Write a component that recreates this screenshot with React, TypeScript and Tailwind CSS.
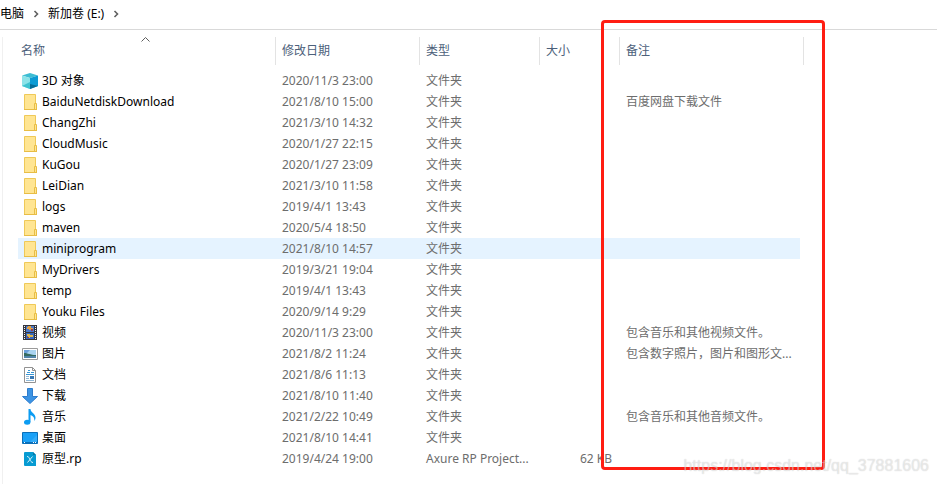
import type { ReactElement } from 'react';

type IconKind =
  | 'folder' | 'cube' | 'video' | 'picture' | 'document'
  | 'download' | 'music' | 'desktop' | 'axure';

interface Entry {
  icon: IconKind;
  name: string;
  date: string;
  type: string;
  size?: string;
  note?: string;
  hovered?: boolean;
}

const FOLDER = '文件夹';

const entries: Entry[] = [
  { icon: 'cube', name: '3D 对象', date: '2020/11/3 23:00', type: FOLDER },
  { icon: 'folder', name: 'BaiduNetdiskDownload', date: '2021/8/10 15:00', type: FOLDER, note: '百度网盘下载文件' },
  { icon: 'folder', name: 'ChangZhi', date: '2021/3/10 14:32', type: FOLDER },
  { icon: 'folder', name: 'CloudMusic', date: '2020/1/27 22:15', type: FOLDER },
  { icon: 'folder', name: 'KuGou', date: '2020/1/27 23:09', type: FOLDER },
  { icon: 'folder', name: 'LeiDian', date: '2021/3/10 11:58', type: FOLDER },
  { icon: 'folder', name: 'logs', date: '2019/4/1 13:43', type: FOLDER },
  { icon: 'folder', name: 'maven', date: '2020/5/4 18:50', type: FOLDER },
  { icon: 'folder', name: 'miniprogram', date: '2021/8/10 14:57', type: FOLDER, hovered: true },
  { icon: 'folder', name: 'MyDrivers', date: '2019/3/21 19:04', type: FOLDER },
  { icon: 'folder', name: 'temp', date: '2019/4/1 13:43', type: FOLDER },
  { icon: 'folder', name: 'Youku Files', date: '2020/9/14 9:29', type: FOLDER },
  { icon: 'video', name: '视频', date: '2020/11/3 23:00', type: FOLDER, note: '包含音乐和其他视频文件。' },
  { icon: 'picture', name: '图片', date: '2021/8/2 11:24', type: FOLDER, note: '包含数字照片，图片和图形文...' },
  { icon: 'document', name: '文档', date: '2021/8/6 11:13', type: FOLDER },
  { icon: 'download', name: '下载', date: '2021/8/10 11:40', type: FOLDER },
  { icon: 'music', name: '音乐', date: '2021/2/22 10:49', type: FOLDER, note: '包含音乐和其他音频文件。' },
  { icon: 'desktop', name: '桌面', date: '2021/8/10 14:41', type: FOLDER },
  { icon: 'axure', name: '原型.rp', date: '2019/4/24 19:00', type: 'Axure RP Project...', size: '62 KB' },
];

const drawings: Record<IconKind, ReactElement> = {
  folder: (
    <>
      <path d="M2.5.5h11v15h-11z" fill="#ffe592" stroke="#efc958" />
      <path d="M12.5 9.5h2v6h-2z" fill="#ffe592" stroke="#e8bd45" />
      <path d="M2 15.5h13" stroke="#e8bd45" />
    </>
  ),
  cube: (
    <>
      <path d="M0 2.5 8 0l8 2.5L8 5z" fill="#3dbdd3" />
      <path d="M0 2.5 8 5v11l-8-3z" fill="#8ce3e8" />
      <path d="M0 13l8-4v7z" fill="#3fc3d0" />
      <path d="M16 2.5 8 5v11l8-3z" fill="#0c9bd4" />
      <path d="M8 11l8 2-8 3z" fill="#066c96" />
    </>
  ),
  video: (
    <>
      <path d="M1 0h14v15H1z" fill="#35363d" />
      <path d="M4 1h8v6H4z" fill="#4a79c9" />
      <path d="M4 8h8v6H4z" fill="#3567bd" />
      <path d="M6 1h3v2h2v2H7V4H5V2h1z" fill="#e6a142" />
      <path d="M5 9h3v1h3v2H8v1H6v-2H5z" fill="#e0b74a" />
      <path d="M9 4h2v2H9zM5 12h2v1H5z" fill="#923e52" />
      <path d="M2.5 1v14M13.5 1v14" stroke="#f4f4f4" strokeDasharray="1 1" />
    </>
  ),
  picture: (
    <>
      <path d="M.5 2.5h15v11H.5z" fill="#fff" stroke="#9a9a9a" />
      <path d="M2 4h12v8H2z" fill="#a9d3f0" />
      <path d="M2 4h6L5 7H2z" fill="#6a9fda" />
      <path d="M2 7c4 0 6 2 12 2v1H2z" fill="#356b61" />
      <path d="M2 10h12v2H2z" fill="#5184aa" />
    </>
  ),
  document: (
    <>
      <path d="M2.5.5h8l3 3v12h-11z" fill="#fff" stroke="#929292" />
      <path d="M10.5.5v3h3" fill="none" stroke="#929292" />
      <path d="M6 3.5h2M5 5.5h3M4 7.5h8M9 5.5h3" stroke="#3695d5" />
      <path d="M4 9.5h3M4 11.5h3M4 13.5h8" stroke="#91b8d6" />
      <path d="M8 9h4v3H8z" fill="#3778b4" />
    </>
  ),
  download: <path d="M5.5.5h5v8h5L8 15.5.5 8.5h5z" fill="#3c94e4" stroke="#2d7ccd" />,
  music: (
    <>
      <ellipse cx="5.2" cy="13.2" rx="3.2" ry="2.5" fill="#0c9cf2" />
      <path d="M6.5 0h2c0 3.5 5 4.5 5 8.5 0 1.5-.5 2.5-1.2 3.5.4-3-.8-5-3.8-6v7h-2z" fill="#0c9cf2" />
    </>
  ),
  desktop: (
    <>
      <path d="M.5 2.5h15v11H.5z" fill="#1ba1f7" stroke="#0a6fb9" />
      <path d="M8 12 15 5v7z" fill="#35adfa" />
      <path d="M1 12.5h14" stroke="#0a6fb9" />
      <path d="M2 12.5h1M11 12.5h1M13 12.5h1" stroke="#fff" />
    </>
  ),
  axure: (
    <>
      <path d="M3 1h8l3 3v11H3a1 1 0 0 1-1-1V2a1 1 0 0 1 1-1z" fill="#079bd2" />
      <path d="M11 1l3 3h-3z" fill="#0678a5" />
      <path d="M5 5.5c3-.5 2.500 6 6 6M10.5 5.5l-5 6" fill="none" stroke="#d7f2fb" />
    </>
  ),
};

function FileIcon({ kind }: { kind: IconKind }) {
  return (
    <svg className="h-4 w-4 shrink-0" viewBox="0 0 16 16" aria-hidden="true">
      {drawings[kind]}
    </svg>
  );
}

function Chevron() {
  return (
    <svg className="h-2 w-2 shrink-0" viewBox="0 0 8 8" fill="none" stroke="#606060" strokeWidth="1.6" aria-hidden="true">
      <path d="M2.500 1l3 3-3 3" />
    </svg>
  );
}

function Heading({ label, sorted, span }: { label: string; sorted?: boolean; span?: number }) {
  return (
    <th scope="col" colSpan={span} aria-sort={sorted ? 'ascending' : undefined} className="p-0 pb-[5px] font-normal">
      <button
        type="button"
        className={`relative flex h-7 w-full items-center border-r border-[#e3e3e3] text-left text-[#4c607a] ${sorted ? 'pl-[3px]' : 'pl-1.5'}`}
      >
        {label}
        {sorted && (
          <svg className="absolute top-0 left-[123px] h-[5px] w-[9px]" viewBox="0 0 9 5" fill="none" stroke="#5e5e5e" aria-hidden="true">
            <path d="M.5 4.500l4-4 4 4" />
          </svg>
        )}
      </button>
    </th>
  );
}

export default function App() {
  return (
    <div className="relative flex min-h-screen flex-col overflow-hidden bg-white font-['Noto_Sans','Noto_Sans_CJK_SC',sans-serif] text-xs text-[#6d6d6d]">
      <nav aria-label="路径" className="flex h-[30px] items-center gap-2 border-b border-[#d9d9d9] pb-px text-black">
        <button type="button">电脑</button>
        <Chevron />
        <button type="button">新加卷 (E:)</button>
        <Chevron />
      </nav>

      <main className="mt-[7px] ml-0.5 flex-1 border-l border-[#f0f0f0] pl-[15px]">
        <table className="w-[786px] table-fixed border-collapse text-left">
          <colgroup>
            <col className="w-[258px]" />
            <col className="w-[144px]" />
            <col className="w-[120px]" />
            <col className="w-[80px]" />
            <col className="w-[180px]" />
            <col className="w-1" />
          </colgroup>
          <thead>
            <tr>
              <Heading label="名称" sorted />
              <Heading label="修改日期" />
              <Heading label="类型" />
              <Heading label="大小" />
              <Heading label="备注" span={2} />
            </tr>
          </thead>
          <tbody>
            {entries.map((entry) => {
              const cell = `h-[21px] truncate p-0 leading-5 ${entry.hovered ? 'bg-[#e5f3ff]' : ''}`;
              return (
                <tr key={entry.name}>
                  <td className={`${cell} pl-1`}>
                    <div className="flex items-center gap-1 text-black">
                      <FileIcon kind={entry.icon} />
                      {entry.name}
                    </div>
                  </td>
                  <td className={`${cell} pl-1.5`}>{entry.date}</td>
                  <td className={`${cell} pl-1.5`}>{entry.type}</td>
                  <td className={`${cell} pr-2 text-right`}>{entry.size}</td>
                  <td className={`${cell} pl-1.5`}>{entry.note}</td>
                  <td className="p-0" />
                </tr>
              );
            })}
          </tbody>
        </table>
      </main>

      <div className="pointer-events-none absolute top-5 left-[601px] h-[450px] w-56 rounded-sm border-3 border-[#ff1d12]" />
      <p className="pointer-events-none absolute right-2 bottom-2 font-['Liberation_Sans',Arial,sans-serif] text-base leading-5 text-white/50 [text-shadow:0_0_1px_rgba(0,0,0,0.22)]">
        https://blog.csdn.net/qq_37881606
      </p>
    </div>
  );
}
